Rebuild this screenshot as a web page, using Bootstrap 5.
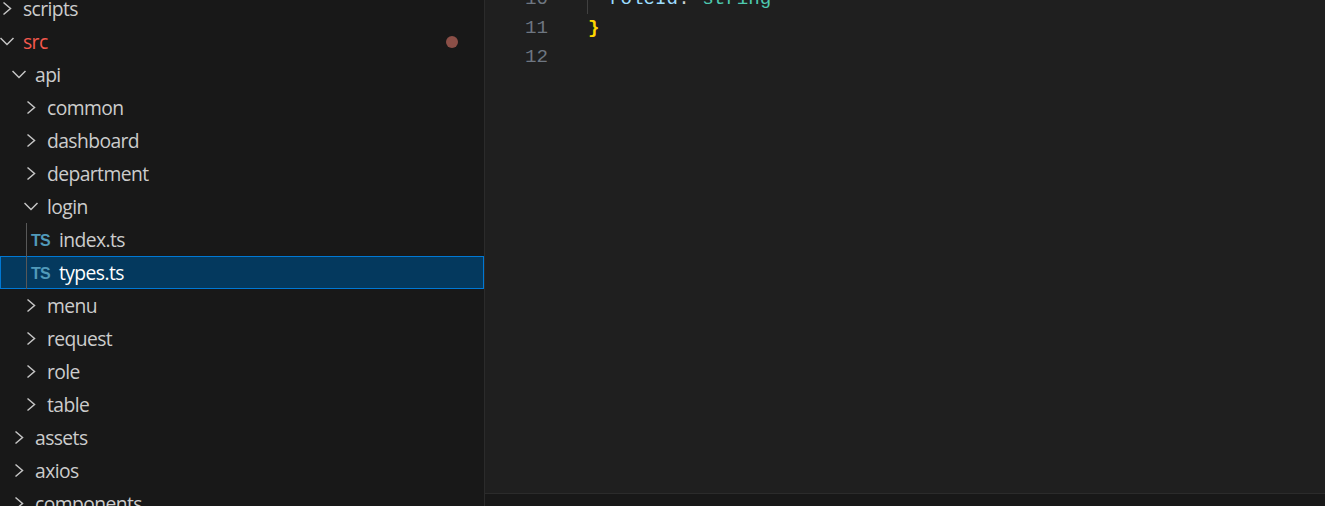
<!DOCTYPE html>
<html lang="en">
<head>
<meta charset="utf-8">
<title>Explorer</title>
<link href="https://cdn.jsdelivr.net/npm/bootstrap@5.3.0/dist/css/bootstrap.min.css" rel="stylesheet">
<style>
html,body{height:100%;overflow:hidden;background:#1f1f1f}
.side-pane{width:485px;background:#181818;border-right:1px solid #2b2b2b;overflow:hidden;flex:none}
.tree-list{margin-top:-8px}
.tree-row{height:33px;color:#cccccc;font:19.3px/33px "Open Sans",sans-serif;letter-spacing:-.58px;white-space:nowrap;position:relative}
.tree-d0{padding-left:0}.tree-d1{padding-left:12px}.tree-d2{padding-left:24px}
.twist{width:23px;flex:none;display:flex;align-items:center;height:33px}
.twist svg{width:15px;height:15px;fill:none;stroke:#c5c5c5;stroke-width:1.5}
.file-row{padding-left:31px}
.ts-mark{width:28px;flex:none;font:700 16px/35px "Liberation Sans",sans-serif;color:#519aba;letter-spacing:-.7px}
.file-row::before{content:"";position:absolute;left:26px;top:0;bottom:0;width:1px;background:#585858}
.picked{background:#04395e;color:#fff;box-shadow:inset 0 0 0 1px #0078d4}
.git-red{color:#f4584d}
.git-dot{width:12px;height:12px;border-radius:50%;background:#8b4f47;margin-left:auto;margin-right:26px}
.main-pane{min-width:0}
.code-area{background:#1f1f1f;overflow:hidden;font:19.2px/29px "Liberation Mono",monospace}
.code-flow{margin-top:-15px}
.num{width:63px;text-align:right;color:#6e7681;flex:none}
.code{margin-left:40px;white-space:pre;position:relative}
.guide{position:absolute;left:-1px;top:0;bottom:0;width:1px;background:#404040}
.c-prop{color:#9cdcfe;margin-left:-2px}.c-punc{color:#cccccc}.c-type{color:#4ec9b0;margin-left:1px}.c-brace{color:#ffd700;font-weight:700}
.bottom-pane{height:13px;flex:none;background:#181818;border-top:1px solid #2b2b2b}
</style>
</head>
<body>
<div class="d-flex h-100">
  <aside class="side-pane">
    <div class="tree-list">
      <div class="tree-row tree-d0 d-flex"><span class="twist"><svg viewBox="0 0 15 15"><path d="M3.5 1.5 10.5 7.5 3.5 13.5"/></svg></span>scripts</div>
      <div class="tree-row tree-d0 d-flex align-items-center git-red"><span class="twist"><svg viewBox="0 0 15 15"><path d="M.5 4 7 10.5 13.5 4"/></svg></span>src<span class="git-dot"></span></div>
      <div class="tree-row tree-d1 d-flex"><span class="twist"><svg viewBox="0 0 15 15"><path d="M.5 4 7 10.5 13.5 4"/></svg></span>api</div>
      <div class="tree-row tree-d2 d-flex"><span class="twist"><svg viewBox="0 0 15 15"><path d="M3.5 1.5 10.5 7.5 3.5 13.5"/></svg></span>common</div>
      <div class="tree-row tree-d2 d-flex"><span class="twist"><svg viewBox="0 0 15 15"><path d="M3.5 1.5 10.5 7.5 3.5 13.5"/></svg></span>dashboard</div>
      <div class="tree-row tree-d2 d-flex"><span class="twist"><svg viewBox="0 0 15 15"><path d="M3.5 1.5 10.5 7.5 3.5 13.5"/></svg></span>department</div>
      <div class="tree-row tree-d2 d-flex"><span class="twist"><svg viewBox="0 0 15 15"><path d="M.5 4 7 10.5 13.5 4"/></svg></span>login</div>
      <div class="tree-row file-row d-flex"><span class="ts-mark">TS</span>index.ts</div>
      <div class="tree-row file-row picked d-flex"><span class="ts-mark">TS</span>types.ts</div>
      <div class="tree-row tree-d2 d-flex"><span class="twist"><svg viewBox="0 0 15 15"><path d="M3.5 1.5 10.5 7.5 3.5 13.5"/></svg></span>menu</div>
      <div class="tree-row tree-d2 d-flex"><span class="twist"><svg viewBox="0 0 15 15"><path d="M3.5 1.5 10.5 7.5 3.5 13.5"/></svg></span>request</div>
      <div class="tree-row tree-d2 d-flex"><span class="twist"><svg viewBox="0 0 15 15"><path d="M3.5 1.5 10.5 7.5 3.5 13.5"/></svg></span>role</div>
      <div class="tree-row tree-d2 d-flex"><span class="twist"><svg viewBox="0 0 15 15"><path d="M3.5 1.5 10.5 7.5 3.5 13.5"/></svg></span>table</div>
      <div class="tree-row tree-d1 d-flex"><span class="twist"><svg viewBox="0 0 15 15"><path d="M3.5 1.5 10.5 7.5 3.5 13.5"/></svg></span>assets</div>
      <div class="tree-row tree-d1 d-flex"><span class="twist"><svg viewBox="0 0 15 15"><path d="M3.5 1.5 10.5 7.5 3.5 13.5"/></svg></span>axios</div>
      <div class="tree-row tree-d1 d-flex"><span class="twist"><svg viewBox="0 0 15 15"><path d="M3.5 1.5 10.5 7.5 3.5 13.5"/></svg></span>components</div>
    </div>
  </aside>
  <main class="main-pane flex-grow-1 d-flex flex-column">
    <div class="code-area flex-grow-1">
      <div class="code-flow">
        <div class="d-flex"><span class="num">10</span><span class="code"><span class="guide"></span>  <span class="c-prop">roleId</span><span class="c-punc">: </span><span class="c-type">string</span></span></div>
        <div class="d-flex"><span class="num">11</span><span class="code c-brace">}</span></div>
        <div class="d-flex"><span class="num">12</span><span class="code"></span></div>
      </div>
    </div>
    <div class="bottom-pane"></div>
  </main>
</div>
<script src="https://cdn.jsdelivr.net/npm/bootstrap@5.3.0/dist/js/bootstrap.bundle.min.js"></script>
</body>
</html>
